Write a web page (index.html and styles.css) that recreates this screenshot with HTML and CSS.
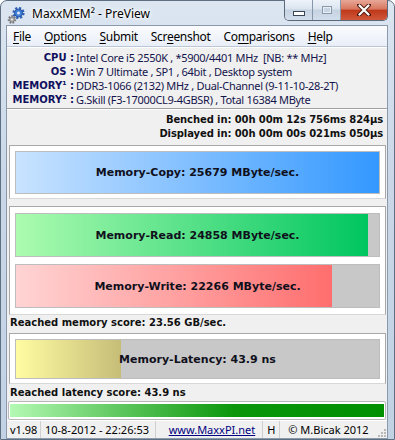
FILE: index.html
```html
<!DOCTYPE html>
<html lang="en">
<head>
  <meta charset="UTF-8">
  <meta name="viewport" content="width=device-width, initial-scale=1.0">
  <title>MaxxMEM² - PreView</title>
  <link rel="stylesheet" href="styles.css">
</head>
<body>

<div class="window">
  <div class="titlebar">
    <svg class="app-icon" width="20" height="20" viewBox="0 0 20 20">
      <circle cx="12.5" cy="8" r="4.6" fill="none" stroke="#2b5fb8" stroke-width="3" stroke-dasharray="2 1.6"/>
      <circle cx="12.5" cy="8" r="4" fill="#3f7fd8" stroke="#1d4a94" stroke-width="0.8"/>
      <circle cx="12.5" cy="8" r="1.5" fill="#dfe8f5"/>
      <circle cx="6" cy="14.5" r="3.2" fill="none" stroke="#7c7c7c" stroke-width="2.2" stroke-dasharray="1.6 1.2"/>
      <circle cx="6" cy="14.5" r="2.6" fill="#a8a8a8" stroke="#666" stroke-width="0.6"/>
      <circle cx="6" cy="14.5" r="1" fill="#eee"/>
    </svg>
    <span class="title">MaxxMEM² - PreView</span>
    <div class="caption-buttons">
      <div class="cap-btn cap-min"><span class="min-glyph"></span></div>
      <div class="cap-btn cap-max"><span class="max-glyph"></span></div>
      <div class="cap-btn cap-close">
        <svg width="14" height="12" viewBox="0 0 14 12">
          <path d="M2 1 L12 11 M12 1 L2 11" stroke="#4a1a10" stroke-width="4" stroke-linecap="round"/>
          <path d="M2.5 1.5 L11.5 10.5 M11.5 1.5 L2.5 10.5" stroke="#fff" stroke-width="2.2" stroke-linecap="round"/>
        </svg>
      </div>
    </div>
  </div>

  <div class="client">
    <div class="menubar">
      <span class="menu-item"><u>F</u>ile</span>
      <span class="menu-item"><u>O</u>ptions</span>
      <span class="menu-item"><u>S</u>ubmit</span>
      <span class="menu-item">Scr<u>e</u>enshot</span>
      <span class="menu-item">Co<u>m</u>parisons</span>
      <span class="menu-item"><u>H</u>elp</span>
    </div>

    <div class="info">
      <span class="label">CPU :</span><span class="value">Intel Core i5 2550K , *5900/4401 MHz&nbsp;&nbsp;[NB: ** MHz]</span>
      <span class="label">OS :</span><span class="value">Win 7 Ultimate , SP1 , 64bit , Desktop system</span>
      <span class="label">MEMORY¹ :</span><span class="value">DDR3-1066 (2132) MHz , Dual-Channel (9-11-10-28-2T)</span>
      <span class="label">MEMORY² :</span><span class="value">G.Skill (F3-17000CL9-4GBSR) , Total 16384 MByte</span>
    </div>

    <div class="timing">
      <div>Benched in: 00h 00m 12s 756ms 824µs</div>
      <div>Displayed in: 00h 00m 00s 021ms 050µs</div>
    </div>

    <div class="panel panel-copy">
      <div class="bar">
        <div class="fill fill-copy" style="width: 100%"></div>
        <div class="bar-label">Memory-Copy: 25679 MByte/sec.</div>
      </div>
    </div>

    <div class="panel panel-rw">
      <div class="bar">
        <div class="fill fill-read" style="width: 97%"></div>
        <div class="bar-label">Memory-Read: 24858 MByte/sec.</div>
      </div>
      <div class="bar">
        <div class="fill fill-write" style="width: 87%"></div>
        <div class="bar-label">Memory-Write: 22266 MByte/sec.</div>
      </div>
    </div>

    <div class="score score-mem">Reached memory score: 23.56 GB/sec.</div>

    <div class="panel panel-lat">
      <div class="bar bar-lat">
        <div class="fill fill-lat" style="width: 29%"></div>
        <div class="bar-label">Memory-Latency: 43.9 ns</div>
      </div>
    </div>

    <div class="score score-lat">Reached latency score: 43.9 ns</div>

    <div class="progress">
      <div class="progress-fill"></div>
    </div>

    <div class="statusbar">
      <span class="seg seg-ver">v1.98</span>
      <span class="seg seg-date">10-8-2012 - 22:26:53</span>
      <span class="seg seg-url"><a href="#">www.MaxxPI.net</a></span>
      <span class="seg seg-h">H</span>
      <span class="seg seg-copy">© M.Bicak 2012</span>
      <svg class="grip" width="10" height="10" viewBox="0 0 10 10">
        <g fill="#b8b8b8">
          <rect x="8" y="2" width="2" height="2"/>
          <rect x="5" y="5" width="2" height="2"/>
          <rect x="8" y="5" width="2" height="2"/>
          <rect x="2" y="8" width="2" height="2"/>
          <rect x="5" y="8" width="2" height="2"/>
          <rect x="8" y="8" width="2" height="2"/>
        </g>
      </svg>
    </div>
  </div>
</div>

</body>
</html>
```

FILE: styles.css
```css
body {
  margin: 0;
  width: 395px;
  height: 440px;
  overflow: hidden;
  background-color: #fff;
  font-family: "Noto Sans", "Open Sans", sans-serif;
}

/* Window frame */
.window {
  box-sizing: border-box;
  width: 395px;
  height: 440px;
  padding: 0 6px 7px 5px;
  display: flex;
  flex-direction: column;
  background: linear-gradient(to bottom, #dce6f1 0%, #c9d7e8 40%, #c2d1e4 100%);
  border: 1px solid #5f6f82;
  border-radius: 7px 7px 0 0;
}

.titlebar {
  height: 25px;
  display: flex;
  align-items: flex-start;
}

.app-icon {
  margin: 4px 0 0 0;
}

.title {
  margin: 4px 0 0 6px;
  font-size: 12px;
  color: #000;
  text-shadow: 0 0 6px #fff, 0 0 4px #fff, 0 0 2px #fff;
}

.caption-buttons {
  margin-left: auto;
  margin-right: 0;
  margin-top: -1px;
  display: flex;
  height: 20px;
  border: 1px solid #5a6879;
  border-top: none;
  border-radius: 0 0 5px 5px;
  overflow: hidden;
}

.cap-btn {
  height: 20px;
  display: flex;
  align-items: center;
  justify-content: center;
}

.cap-min, .cap-max {
  width: 27px;
  background: linear-gradient(to bottom, #eef3f9 0%, #dbe4ef 45%, #c5d2e1 50%, #d3deeb 100%);
  border-right: 1px solid #8797aa;
}

.min-glyph {
  width: 10px;
  height: 3px;
  margin-top: 6px;
  background: #fff;
  border: 1px solid #3a4656;
}

.max-glyph {
  width: 8px;
  height: 6px;
  border: 1px solid #8a98aa;
  box-shadow: inset 0 0 0 1px #e8eef5;
  background: #c8d4e2;
}

.cap-close {
  width: 46px;
  background: linear-gradient(to bottom, #e8a797 0%, #d7775f 45%, #c0391b 52%, #d0583a 100%);
}

/* Client area */
.client {
  flex: 1;
  display: flex;
  flex-direction: column;
  background-color: #f0f0f0;
  border: 1px solid #8a99ab;
}

.menubar {
  height: 20px;
  display: flex;
  align-items: center;
  font-size: 12px;
  letter-spacing: -0.3px;
  color: #000;
  background: linear-gradient(to bottom, #fbfcfe 0%, #e9eef7 100%);
  border-bottom: 1px solid #b9c7d9;
}

.menu-item {
  padding: 0 6px;
  margin-right: 1px;
}

.menu-item u {
  text-decoration-thickness: 1px;
  text-underline-offset: 2px;
}

.info {
  display: grid;
  grid-template-columns: 67px auto;
  column-gap: 2px;
  padding: 3px 0 1px;
  border-top: 1px solid #fff;
  border-bottom: 1px solid #a0a0a0;
  line-height: 14px;
}

.info .label {
  text-align: right;
  font-family: "DejaVu Sans", sans-serif;
  font-weight: bold;
  font-size: 10px;
  color: #10105e;
  white-space: nowrap;
}

.info .value {
  font-size: 11px;
  letter-spacing: -0.3px;
  color: #14144c;
  white-space: nowrap;
}

.timing {
  padding: 3px 4px 1px 0;
  text-align: right;
  font-family: "DejaVu Sans", sans-serif;
  font-weight: bold;
  font-size: 10px;
  letter-spacing: -0.1px;
  line-height: 14px;
  color: #111;
  border-top: 1px solid #fff;
}

/* Bar panels */
.panel {
  margin: 3px 1px 0 2px;
  padding: 5px 5px 4px;
  display: flex;
  flex-direction: column;
  gap: 7px;
  background-color: #fff;
  border: 1px solid #a8a8a8;
  border-bottom-color: #d8d8d8;
}

.panel-rw {
  margin-top: 7px;
  padding: 6px 5px 6px;
}

.bar {
  height: 41px;
  display: grid;
  background-color: #c8c8c8;
  border: 1px solid #bdbdbd;
}

.panel-rw .bar {
  height: 42px;
}

.bar-lat {
  height: 38px;
}

.fill, .bar-label {
  grid-area: 1 / 1;
}

.bar-label {
  align-self: center;
  justify-self: center;
  font-family: "DejaVu Sans", sans-serif;
  font-weight: bold;
  font-size: 11px;
  color: #10101c;
  white-space: nowrap;
}

.fill-copy { background: linear-gradient(to right, #c9e3ff, #3398ff); }
.fill-read { background: linear-gradient(to right, #acfbb0, #00c660); }
.fill-write { background: linear-gradient(to right, #ffd4d4, #ff6e6e); }
.fill-lat { background: linear-gradient(to right, #fffca2, #c6bd78); }

.score {
  padding-left: 3px;
  font-family: "DejaVu Sans", sans-serif;
  font-weight: bold;
  font-size: 10px;
  color: #101010;
  line-height: 15px;
}

.score-lat {
  line-height: 17px;
}

.progress {
  height: 13px;
  margin: 0 1px;
  padding: 2px 1px;
  background-color: #fff;
  border: 1px solid #b8b8b8;
  border-radius: 2px;
}

.progress-fill {
  height: 100%;
  background: linear-gradient(to right, #b4f9b4 0%, #5cc65c 30%, #0b960b 60%, #009000 100%);
}

/* Status bar */
.statusbar {
  flex: 1;
  display: flex;
  align-items: center;
  font-size: 11px;
  color: #000;
  border-top: 1px solid #fff;
}

.seg {
  box-sizing: border-box;
  height: 17px;
  line-height: 17px;
  border-right: 1px solid #cfcfcf;
  white-space: nowrap;
}

.seg-ver { width: 34px; padding-left: 3px; }
.seg-date { width: 115px; padding-left: 4px; }
.seg-url { width: 108px; text-align: center; padding-left: 6px; }
.seg-h { width: 17px; padding-left: 4px; }
.seg-copy { width: 96px; padding-left: 8px; border-right: none; }

.seg-url a {
  color: #000080;
  text-decoration: underline;
}

.grip {
  margin-left: auto;
  margin-right: 1px;
  align-self: flex-end;
  margin-bottom: 1px;
}
```
